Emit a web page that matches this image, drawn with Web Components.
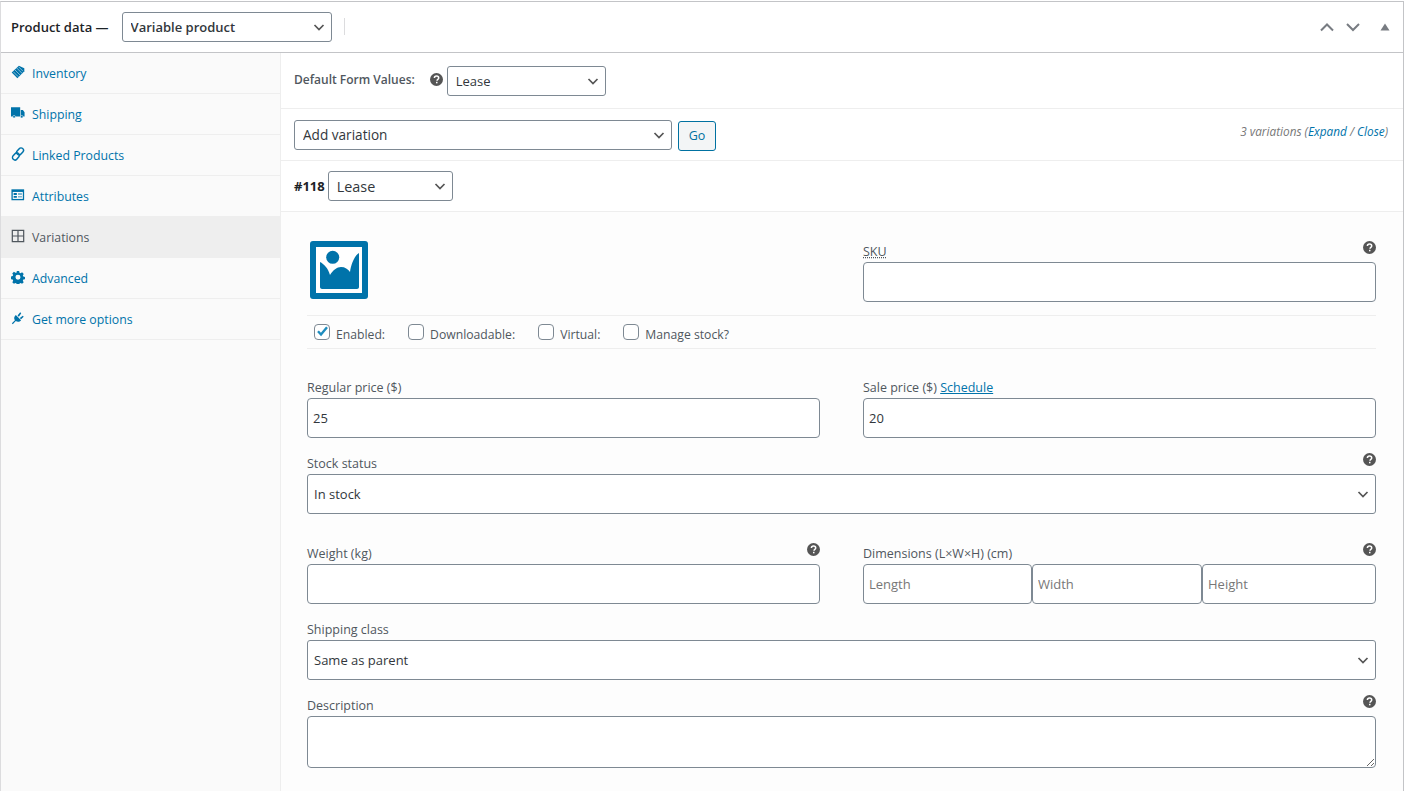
<!DOCTYPE html>
<html lang="en">
<head>
<meta charset="utf-8">
<title>Product data</title>
<style>
  html, body { margin: 0; background: #fff; }
  body { font-family: "Open Sans", "Liberation Sans", sans-serif; font-size: 12.5px; color: #50575e; overflow: hidden; }
</style>
</head>
<body>
<product-data>
  <span slot="title">Product data —</span>
  <wc-select slot="type" width="210" strong value="Variable product"></wc-select>

  <wc-tab slot="tabs" icon="tag">Inventory</wc-tab>
  <wc-tab slot="tabs" icon="truck">Shipping</wc-tab>
  <wc-tab slot="tabs" icon="link">Linked Products</wc-tab>
  <wc-tab slot="tabs" icon="card">Attributes</wc-tab>
  <wc-tab slot="tabs" icon="grid" active>Variations</wc-tab>
  <wc-tab slot="tabs" icon="gear">Advanced</wc-tab>
  <wc-tab slot="tabs" icon="plug">Get more options</wc-tab>

  <tool-row height="56">
    <strong style="font-weight:600;font-size:12px;color:#50575e;margin-top:-3px">Default Form Values:</strong>
    <wc-help style="margin:-2px 0 0 15px"></wc-help>
    <wc-select width="159" value="Lease" style="margin-left:4px"></wc-select>
  </tool-row>
  <tool-row height="52">
    <wc-select width="378" size="13.6" value="Add variation"></wc-select>
    <wc-button style="margin:2px 0 0 6px">Go</wc-button>
    <variation-count>3 variations (<a>Expand</a> / <a>Close</a>)</variation-count>
  </tool-row>
  <tool-row height="51">
    <strong style="font-weight:700;font-size:13px;color:#1d2327;margin-right:3px">#118</strong>
    <wc-select width="125" size="14.4" value="Lease"></wc-select>
  </tool-row>

  <variation-panel>
    <image-placeholder slot="top-left"></image-placeholder>
    <wc-field slot="top-right" label="SKU" help dotted><wc-input></wc-input></wc-field>
    <wc-check slot="checks" checked>Enabled:</wc-check>
    <wc-check slot="checks">Downloadable:</wc-check>
    <wc-check slot="checks">Virtual:</wc-check>
    <wc-check slot="checks">Manage stock?</wc-check>

    <field-row columns="2" style="margin-top:28px">
      <wc-field label="Regular price ($)"><wc-input value="25"></wc-input></wc-field>
      <wc-field label="Sale price ($)" link="Schedule"><wc-input value="20"></wc-input></wc-field>
    </field-row>
    <field-row style="margin-top:15px">
      <wc-field label="Stock status" help><wc-select block tall value="In stock"></wc-select></wc-field>
    </field-row>
    <field-row columns="2" style="margin-top:29px">
      <wc-field label="Weight (kg)" help><wc-input></wc-input></wc-field>
      <wc-field label="Dimensions (L×W×H) (cm)" help>
        <dimension-inputs>
          <wc-input placeholder="Length"></wc-input>
          <wc-input placeholder="Width"></wc-input>
          <wc-input placeholder="Height"></wc-input>
        </dimension-inputs>
      </wc-field>
    </field-row>
    <field-row style="margin-top:15px">
      <wc-field label="Shipping class"><wc-select block tall value="Same as parent"></wc-select></wc-field>
    </field-row>
    <field-row style="margin-top:15px">
      <wc-field label="Description" help><wc-textarea></wc-textarea></wc-field>
    </field-row>
  </variation-panel>
</product-data>

<script>
const ICONS = {
  tag: '<path d="M9 .8 15.200 3.600V7.200L7.300 15.200 .8 8.700z" fill="currentColor"/><path d="M6.500 3.400l6.300 6.300M8.800 2.200l5 5M4.300 5.400l6.300 6.300M2.700 7.800l5.600 5.600" stroke="#a8cfe3" stroke-width=".9" fill="none"/>',
  truck: '<path d="M0 1.500h10.500v10.500H0zM11.200 4.500h2.400L15.500 7v5h-4.300z" fill="currentColor"/><circle cx="3.500" cy="12.300" r="1.500" fill="currentColor" stroke="#fafafa" stroke-width=".6"/><circle cx="12.300" cy="12.300" r="1.500" fill="currentColor" stroke="#fafafa" stroke-width=".6"/>',
  link: '<g fill="none" stroke="currentColor" stroke-width="1.700"><rect x="7.600" y=".6" width="5.600" height="8.800" rx="2.800" transform="rotate(42 10.400 5)"/><rect x="2.800" y="6.400" width="5.600" height="8.800" rx="2.800" transform="rotate(42 5.600 10.800)"/></g>',
  card: '<path d="M.5 1.500h14.500v12.500H.5z" fill="currentColor"/><path d="M2 4.500h11.500v8H2z" fill="#fafafa"/><path d="M3 5.700h3.700v2.200H3zM3 9h3.700v2.200H3zM8 6.400h4.500v1.100H8zM8 9.600h4.500v1.100H8z" fill="currentColor"/>',
  grid: '<path d="M1.500 1.500h13v13h-13zM8 1.500v13M1.500 8h13" fill="none" stroke="currentColor" stroke-width="1.400"/>',
  gear: '<path fill="currentColor" fill-rule="evenodd" d="M6.600 1h2.800l.4 2 1.300.6 1.800-1.100 2 2-1.100 1.800.6 1.300 2 .4v2.800l-2 .4-.6 1.300 1.100 1.800-2 2-1.800-1.100-1.300.6-.4 2H6.600l-.4-2-1.300-.6-1.800 1.100-2-2 1.100-1.800-.6-1.300-2-.4V7.400l2-.4.6-1.300L1.100 3.900l2-2 1.800 1.100L6.200 3zM8 5.300a3 3 0 1 0 0 6 3 3 0 0 0 0-6z" transform="translate(.4 .3) scale(.95)"/>',
  plug: '<path fill="currentColor" d="M5.500 4.500l6 6c-1.500 2-4 2.500-6 1L2 15l-1-1 3.500-3.500c-1.500-2-1-4.500 1-6zM7.500 5l3-3.500 1.200 1.200L9 6.500zM10 8l3.500-2.500 1 1.200L11.500 9.500z"/>'
};

function shadow(el, html) {
  el.attachShadow({ mode: 'open' }).innerHTML = html;
}

class ProductData extends HTMLElement {
  constructor() {
    super();
    shadow(this, `
      <style>
        :host { display: block; box-sizing: border-box; width: 1404px; height: 790px; margin-top: 1px; border: 1px solid #c3c4c7; border-left-color: #dcdcde; border-bottom: 0; background: #fff; overflow: hidden; }
        header { display: flex; align-items: center; box-sizing: border-box; height: 51px; padding-left: 10px; border-bottom: 1px solid #c3c4c7; }
        .title { font-weight: 600; font-size: 13px; color: #1d2327; margin-right: 13px; }
        .sep { width: 1px; height: 17px; background: #dcdcde; margin: 0 0 2px 12px; }
        .handles { margin-left: auto; display: flex; align-items: center; color: #787c82; }
        .handles svg { display: block; }
        .body { display: flex; height: calc(100% - 51px); }
        nav { flex: none; width: 279px; background: #fafafa; border-right: 1px solid #eee; }
        main { flex: 1; min-width: 0; display: flex; flex-direction: column; }
      </style>
      <header>
        <span class="title"><slot name="title"></slot></span>
        <slot name="type"></slot>
        <span class="sep"></span>
        <span class="handles">
          <svg width="16" height="16" viewBox="0 0 16 16" fill="none" stroke="currentColor" stroke-width="2"><path d="M2 11.500 8 5.500l6 6"/></svg>
          <svg width="16" height="16" viewBox="0 0 16 16" fill="none" stroke="currentColor" stroke-width="2" style="margin-left:10px"><path d="M2 5l6 6 6-6"/></svg>
          <svg width="10" height="8" viewBox="0 0 10 8" fill="currentColor" style="margin:0 13px 0 19px"><path d="M5 .5 9.500 7.500H.5z"/></svg>
        </span>
      </header>
      <div class="body">
        <nav><slot name="tabs"></slot></nav>
        <main><slot></slot></main>
      </div>`);
  }
}

class WcTab extends HTMLElement {
  constructor() {
    super();
    shadow(this, `
      <style>
        :host { display: flex; align-items: center; box-sizing: border-box; height: 41px; padding-left: 10px; border-bottom: 1px solid #eee; color: #0073aa; font-size: 12.300px; }
        :host([active]) { background: #eee; color: #50575e; }
        svg { flex: none; width: 14px; height: 14px; margin: -3px 7px 0 0; }
      </style>
      <svg viewBox="0 0 16 16">${ICONS[this.getAttribute('icon')] || ''}</svg>
      <span><slot></slot></span>`);
  }
}

class ToolRow extends HTMLElement {
  constructor() {
    super();
    shadow(this, `
      <style>
        :host { display: flex; align-items: center; flex: none; box-sizing: border-box; height: ${this.getAttribute('height')}px; padding: 0 15px 0 13px; border-bottom: 1px solid #eee; background: #fff; }
      </style>
      <slot></slot>`);
  }
}

class WcSelect extends HTMLElement {
  constructor() {
    super();
    const w = this.getAttribute('width');
    const tall = this.hasAttribute('tall');
    shadow(this, `
      <style>
        :host { display: ${this.hasAttribute('block') ? 'block' : 'inline-block'}; position: relative; flex: none; ${w ? `width:${w}px;` : ''} }
        select { appearance: none; -webkit-appearance: none; display: block; box-sizing: border-box; width: 100%; height: ${tall ? 40 : 30}px; margin: 0; padding: 0 24px 0 ${tall ? 6 : 8}px; border: 1px solid #7e8993; border-radius: 3px; background: #fff; color: #32373c; font: inherit; font-size: ${this.getAttribute('size') || 13}px; ${this.hasAttribute('strong') ? 'font-weight:600;' : ''} }
        svg { position: absolute; right: 7px; top: 50%; margin-top: -6px; width: 12px; height: 12px; pointer-events: none; }
      </style>
      <select><option>${this.getAttribute('value') || ''}</option></select>
      <svg viewBox="0 0 12 12" fill="none" stroke="#555" stroke-width="1.700"><path d="M1.500 4l4.500 4.500L10.500 4"/></svg>`);
  }
}

class WcButton extends HTMLElement {
  constructor() {
    super();
    shadow(this, `
      <style>
        :host { display: inline-block; flex: none; }
        button { box-sizing: border-box; width: 38px; height: 30px; padding: 0; border: 1px solid #0071a1; border-radius: 3px; background: #f3f5f6; color: #0071a1; font: inherit; }
      </style>
      <button><slot></slot></button>`);
  }
}

class VariationCount extends HTMLElement {
  constructor() {
    super();
    shadow(this, `
      <style>
        :host { margin: -8px 0 0 auto; font-style: italic; font-size: 11.800px; color: #777; }
        ::slotted(a) { color: #0073aa; }
      </style>
      <slot></slot>`);
  }
}

class WcHelp extends HTMLElement {
  constructor() {
    super();
    shadow(this, `
      <style>
        :host { display: inline-flex; flex: none; width: 13px; height: 13px; }
        svg { display: block; width: 13px; height: 13px; }
      </style>
      <svg viewBox="0 0 13 13"><circle cx="6.500" cy="6.500" r="6.500" fill="#555"/><path d="M4.400 5.100c0-1.300.9-2.100 2.200-2.100s2.100.8 2.100 1.900c0 1.500-1.700 1.500-1.700 2.800" fill="none" stroke="#fff" stroke-width="1.500"/><rect x="6" y="8.800" width="1.500" height="1.500" fill="#fff"/></svg>`);
  }
}

class VariationPanel extends HTMLElement {
  constructor() {
    super();
    shadow(this, `
      <style>
        :host { display: block; flex: 1; box-sizing: border-box; padding: 29px 27px 0 26px; background: #fdfdfd; }
        .top { display: grid; grid-template-columns: 513px 513px; column-gap: 43px; height: 74px; }
        .checks { display: flex; align-items: center; box-sizing: border-box; height: 34px; padding-left: 7px; border-top: 1px solid #eee; border-bottom: 1px solid #eee; }
      </style>
      <div class="top"><div><slot name="top-left"></slot></div><div><slot name="top-right"></slot></div></div>
      <div class="checks"><slot name="checks"></slot></div>
      <slot></slot>`);
  }
}

class ImagePlaceholder extends HTMLElement {
  constructor() {
    super();
    shadow(this, `
      <style>
        :host { display: block; width: 58px; height: 58px; margin-left: 3px; }
        svg { display: block; }
      </style>
      <svg width="58" height="58" viewBox="0 0 58 58">
        <rect width="58" height="58" rx="3" fill="#0073aa"/>
        <rect x="6" y="6" width="46" height="46" fill="#fff"/>
        <circle cx="22.700" cy="16.300" r="6.500" fill="#0073aa"/>
        <path d="M10 21C14 23 18 27 20 34C23 29 27 26 31 26C35 26 38 28 40 31C41 24 44 15 49 12V46C49 47 48 48 47 48H12C11 48 10 47 10 46Z" fill="#0073aa"/>
      </svg>`);
  }
}

class WcField extends HTMLElement {
  constructor() {
    super();
    const link = this.getAttribute('link');
    shadow(this, `
      <style>
        :host { display: block; min-width: 0; }
        .head { display: flex; justify-content: space-between; align-items: flex-end; height: 21px; font-size: 12.500px; color: #50575e; }
        .lbl { line-height: 17px; margin-bottom: 2px; }
        .dotted { text-decoration: underline dotted; }
        a { color: #0073aa; text-decoration: underline; }
        wc-help { margin-bottom: 8px; }
      </style>
      <div class="head">
        <span class="lbl"><span class="${this.hasAttribute('dotted') ? 'dotted' : ''}">${this.getAttribute('label')}</span>${link ? ` <a>${link}</a>` : ''}</span>
        ${this.hasAttribute('help') ? '<wc-help></wc-help>' : ''}
      </div>
      <slot></slot>`);
  }
}

class FieldRow extends HTMLElement {
  constructor() {
    super();
    const two = this.getAttribute('columns') === '2';
    shadow(this, `
      <style>
        :host { display: grid; grid-template-columns: ${two ? '513px 513px' : '1fr'}; column-gap: 43px; }
      </style>
      <slot></slot>`);
  }
}

class WcInput extends HTMLElement {
  constructor() {
    super();
    const value = this.getAttribute('value') || '';
    const placeholder = this.getAttribute('placeholder') || '';
    shadow(this, `
      <style>
        :host { display: block; min-width: 0; }
        input { display: block; box-sizing: border-box; width: 100%; height: 40px; margin: 0; padding: 0 5px; border: 1px solid #7e8993; border-radius: 4px; background: #fff; color: #32373c; font: inherit; font-size: 13px; outline: 0; }
        input::placeholder { color: #777; opacity: 1; }
      </style>
      <input type="text" value="${value}" placeholder="${placeholder}">`);
  }
}

class DimensionInputs extends HTMLElement {
  constructor() {
    super();
    shadow(this, `
      <style>
        :host { display: grid; grid-template-columns: 169px 170px 174px; }
      </style>
      <slot></slot>`);
  }
}

class WcTextarea extends HTMLElement {
  constructor() {
    super();
    shadow(this, `
      <style>
        :host { display: block; }
        textarea { display: block; box-sizing: border-box; width: 100%; height: 52px; margin: 0; padding: 4px 6px; border: 1px solid #7e8993; border-radius: 4px; background: #fff; font: inherit; }
      </style>
      <textarea></textarea>`);
  }
}

class WcCheck extends HTMLElement {
  constructor() {
    super();
    shadow(this, `
      <style>
        :host { display: inline-flex; align-items: center; margin-right: 23px; font-size: 12.200px; color: #50575e; }
        .box { position: relative; display: block; width: 16px; height: 16px; margin-right: 6px; }
        input { appearance: none; -webkit-appearance: none; display: block; box-sizing: border-box; width: 16px; height: 16px; margin: 0; border: 1px solid #7e8993; border-radius: 4px; background: #fff; }
        svg { display: none; position: absolute; left: 1px; top: 0; width: 15px; height: 15px; }
        :host([checked]) svg { display: block; }
        .t { margin-top: 4px; }
      </style>
      <span class="box">
        <input type="checkbox" ${this.hasAttribute('checked') ? 'checked' : ''}>
        <svg viewBox="0 0 15 15" fill="none" stroke="#1e8cbe" stroke-width="2.400"><path d="M3 7.300 6 10.500 12 3.200"/></svg>
      </span>
      <span class="t"><slot></slot></span>`);
  }
}

customElements.define('product-data', ProductData);
customElements.define('wc-tab', WcTab);
customElements.define('tool-row', ToolRow);
customElements.define('wc-select', WcSelect);
customElements.define('wc-button', WcButton);
customElements.define('variation-count', VariationCount);
customElements.define('wc-help', WcHelp);
customElements.define('variation-panel', VariationPanel);
customElements.define('image-placeholder', ImagePlaceholder);
customElements.define('wc-field', WcField);
customElements.define('field-row', FieldRow);
customElements.define('wc-input', WcInput);
customElements.define('dimension-inputs', DimensionInputs);
customElements.define('wc-textarea', WcTextarea);
customElements.define('wc-check', WcCheck);
</script>
</body>
</html>
